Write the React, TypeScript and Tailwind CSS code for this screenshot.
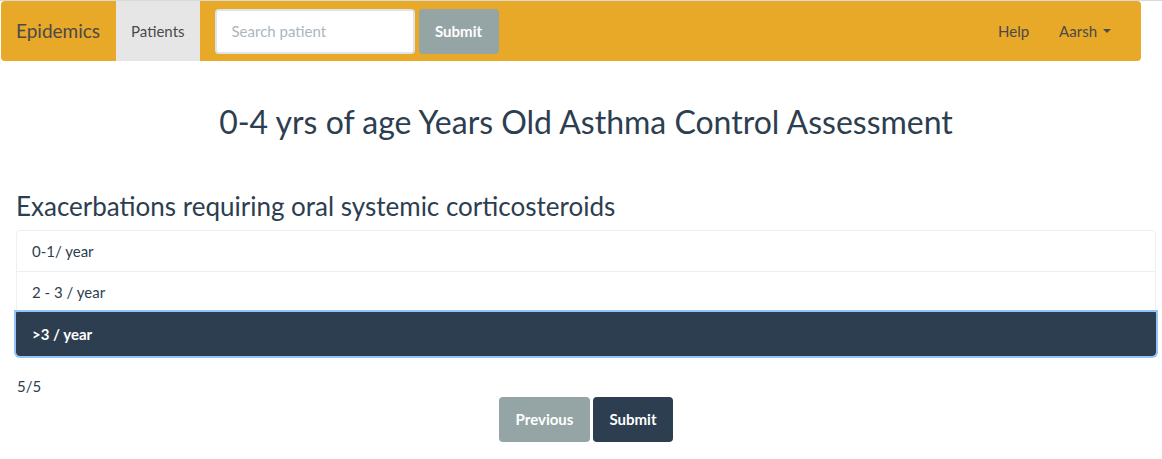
import React from 'react';

const options = ['0-1/ year', '2 - 3 / year', '>3 / year'];

const App = () => {
  const selected = 2;
  return (
    <div className="min-h-[459px] bg-white border-t border-[#d9d9d9] font-['Lato','Open_Sans',sans-serif] text-[15px] text-[#2c3e50]">
      {/* navbar */}
      <nav className="ml-[1px] w-[1140px] h-[60px] bg-[#e8a828] rounded-[4px] flex items-center">
        <a className="pl-[15px] pr-[16px] text-[19px] text-[#4a4a4a] leading-[60px]">Epidemics</a>
        <a className="h-full px-[15px] flex items-center bg-[#e6e6e6] text-[#4a4a4a]">Patients</a>
        <form className="flex items-center ml-[15px] gap-[4px]">
          <input
            className="w-[200px] h-[45px] rounded-[4px] border-2 border-[#dce4ec] bg-white px-[15px] text-[15px] placeholder:text-[#acb6c0] outline-none"
            placeholder="Search patient"
          />
          <button className="w-[80px] h-[45px] rounded-[4px] bg-[#95a5a6] text-white font-bold">Submit</button>
        </form>
        <div className="ml-auto flex items-center mr-[15px] text-[#4a4a4a]">
          <a className="px-[15px]">Help</a>
          <a className="px-[15px] flex items-center gap-[6px]">
            Aarsh
            <span className="w-0 h-0 border-x-[4px] border-x-transparent border-t-[4px] border-t-[#4a4a4a]" />
          </a>
        </div>
      </nav>

      <div className="ml-[16px] w-[1140px]">
        <h2 className="text-center text-[32px] leading-[36px] mt-[43px]">
          0-4 yrs of age Years Old Asthma Control Assessment
        </h2>
        <h3 className="text-[26px] leading-[28px] mt-[52px]">Exacerbations requiring oral systemic corticosteroids</h3>
        <div className="mt-[10px] flex flex-col">
          {options.map((o, i) =>
            i === selected ? (
              <div
                key={o}
                className="h-[44px] -mt-px px-[15px] flex items-center bg-[#2c3e50] text-white font-bold rounded-b-[4px] border border-[#2c3e50] shadow-[0_0_0_2px_#95c4f6] relative"
              >
                {o}
              </div>
            ) : (
              <div
                key={o}
                className={
                  'h-[42px] px-[15px] flex items-center bg-white border border-[#ecf0f1] ' +
                  (i === 0 ? 'rounded-t-[4px]' : '-mt-px')
                }
              >
                {o}
              </div>
            )
          )}
        </div>
        <div className="mt-[20px] ml-[1px] leading-[21px]">5/5</div>
        <div className="flex justify-center gap-[3px] mt-0">
          <button className="w-[91px] h-[45px] rounded-[4px] bg-[#95a5a6] text-white font-bold">Previous</button>
          <button className="w-[80px] h-[45px] rounded-[4px] bg-[#2c3e50] text-white font-bold">Submit</button>
        </div>
      </div>
    </div>
  );
};

export default App;
